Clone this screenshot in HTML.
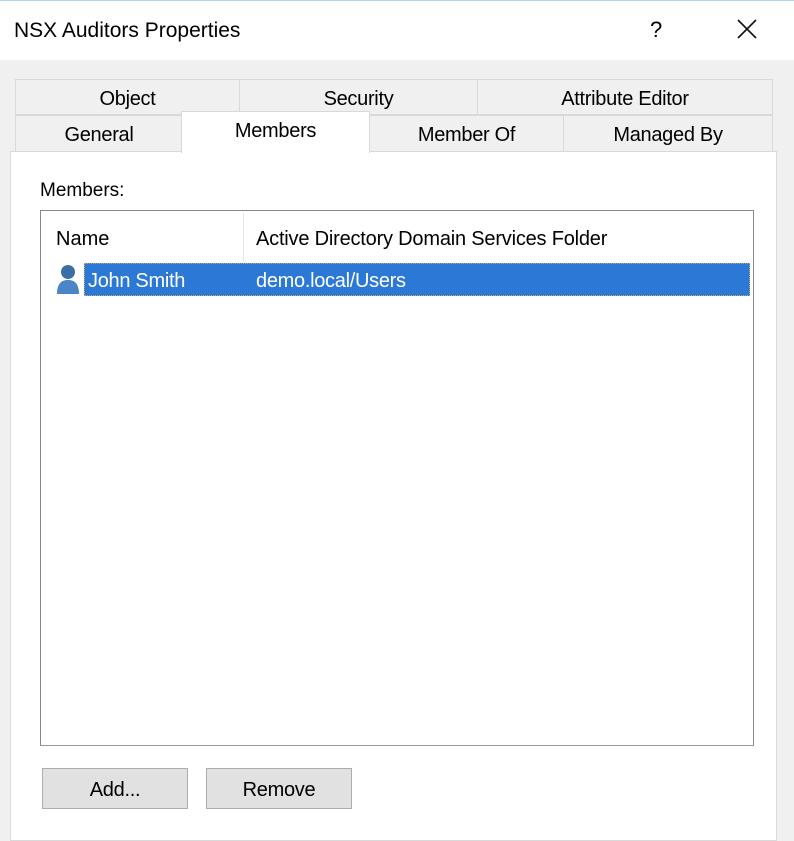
<!DOCTYPE html>
<html><head><style>
body{margin:0;width:794px;height:830px;overflow:hidden;background:#f0f0f0;font-family:"Liberation Sans",sans-serif;color:#000;position:relative}
div{position:absolute;box-sizing:border-box}
.t{font-size:20px;display:flex;align-items:center;justify-content:center;background:#f0f0f0;border:1px solid #d9d9d9;letter-spacing:-0.3px;padding-top:4px}
</style></head><body>
<div style="left:0;top:0;width:794px;height:60px;background:#fff;border-top:1px solid #a8d4f0"></div>
<div style="left:14px;top:19px;font-size:21px">NSX Auditors Properties</div>
<div style="left:650px;top:17px;font-size:22px">?</div>
<svg style="position:absolute;left:737px;top:19px" width="20" height="20"><path d="M1 1L19 19M19 1L1 19" stroke="#111" stroke-width="1.6"/></svg>
<div class="t" style="left:15px;top:79px;width:225px;height:36px">Object</div>
<div class="t" style="left:239px;top:79px;width:239px;height:36px">Security</div>
<div class="t" style="left:477px;top:79px;width:296px;height:36px">Attribute Editor</div>
<div style="left:10px;top:151px;width:767px;height:690px;background:#fff;border:1px solid #d9d9d9"></div>
<div class="t" style="left:15px;top:115px;width:168px;height:37px">General</div>
<div class="t" style="left:369px;top:115px;width:195px;height:37px">Member Of</div>
<div class="t" style="left:563px;top:115px;width:210px;height:37px">Managed By</div>
<div class="t" style="left:181px;top:111px;width:189px;height:42px;background:#fff;border-bottom:none;align-items:flex-start;padding-top:8px">Members</div>
<div style="left:40px;top:180px;font-size:19px">Members:</div>
<div style="left:40px;top:210px;width:714px;height:536px;background:#fff;border:1px solid #828790;border-bottom-color:#9a9a9a"></div>
<div style="left:243px;top:213px;width:1px;height:48px;background:#e5e5e5"></div>
<div style="left:56px;top:228px;font-size:20px">Name</div>
<div style="left:256px;top:228px;font-size:20px;letter-spacing:-0.2px">Active Directory Domain Services Folder</div>
<svg style="position:absolute;left:56px;top:263px" width="26" height="32"><circle cx="12" cy="9" r="7" fill="#3b6ea5"/><path d="M1 31C1 20 6 17 12 17S23 20 23 31Z" fill="#4a86c5"/></svg>
<div style="left:84px;top:263px;width:666px;height:33px;background:#2b78d6;border:1px dotted #c9a86a"></div>
<div style="left:88px;top:270px;font-size:20px;color:#fff;letter-spacing:-0.3px">John Smith</div>
<div style="left:256px;top:270px;font-size:20px;color:#fff;letter-spacing:-0.3px">demo.local/Users</div>
<div class="t" style="left:42px;top:768px;width:146px;height:41px;background:#e1e1e1;border-color:#adadad">Add...</div>
<div class="t" style="left:206px;top:768px;width:146px;height:41px;background:#e1e1e1;border-color:#adadad">Remove</div>
</body></html>
